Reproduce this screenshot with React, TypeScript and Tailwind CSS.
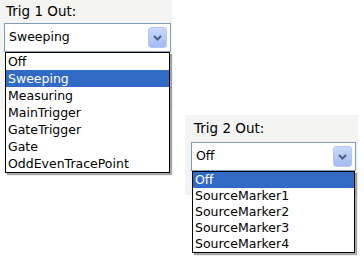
import React from "react";

const font = { fontFamily: '"DejaVu Sans", Tahoma, sans-serif' };

function Chevron() {
  return (
    <div className="w-[19px] h-[21px] rounded-[3px] border border-[#b4c6f2] bg-gradient-to-b from-[#cad8fc] to-[#a4baf2] flex items-center justify-center">
      <svg width="9" height="6" viewBox="0 0 9 6">
        <path d="M1 1 L4.5 4.5 L8 1" stroke="#4d6185" strokeWidth="2" fill="none" />
      </svg>
    </div>
  );
}

function Select({ value, width }: { value: string; width: string }) {
  return (
    <div className={`${width} h-[29px] border border-[#7f9db9] bg-white flex items-center justify-between pl-[4px] pr-[3px]`}>
      <span className="text-[12.5px] text-black leading-none">{value}</span>
      <Chevron />
    </div>
  );
}

function List({ items, selected, width, itemClass }: { items: string[]; selected: string; width: string; itemClass: string }) {
  return (
    <div className={`absolute top-full ${width} border border-black bg-white shadow-[2px_2px_1px_rgba(0,0,0,0.35)] z-10`}>
      {items.map((it) => (
        <div
          key={it}
          className={`${itemClass} pl-[2px] text-[12.5px] ${it === selected ? "bg-[#316ac5] text-white" : "text-black"}`}
        >
          {it}
        </div>
      ))}
    </div>
  );
}

export default function App() {
  return (
    <div className="w-[364px] h-[263px] bg-white flex items-start" style={font}>
      <div className="w-[172px] h-[110px] bg-[#f4f4f2] flex flex-col">
        <div className="pl-[6px] pt-[2px] h-[23px] text-[13.5px] text-black leading-[18px]">Trig 1 Out:</div>
        <div className="relative ml-[4px]">
          <Select value="Sweeping" width="w-[167px]" />
          <List
            items={["Off", "Sweeping", "Measuring", "MainTrigger", "GateTrigger", "Gate", "OddEvenTracePoint"]}
            selected="Sweeping"
            width="left-[1px] w-[165px]"
            itemClass="h-[17px] leading-[17px]"
          />
        </div>
      </div>
      <div className="ml-[13px] mt-[115px] w-[173px] h-[80px] bg-[#f4f4f2] flex flex-col">
        <div className="pl-[9px] pt-[4px] h-[27px] text-[13.5px] text-black leading-[18px]">Trig 2 Out:</div>
        <div className="relative ml-[6px]">
          <Select value="Off" width="w-[165px]" />
          <List
            items={["Off", "SourceMarker1", "SourceMarker2", "SourceMarker3", "SourceMarker4"]}
            selected="Off"
            width="left-[1px] w-[163px]"
            itemClass="h-[16px] leading-[16px]"
          />
        </div>
      </div>
    </div>
  );
}
